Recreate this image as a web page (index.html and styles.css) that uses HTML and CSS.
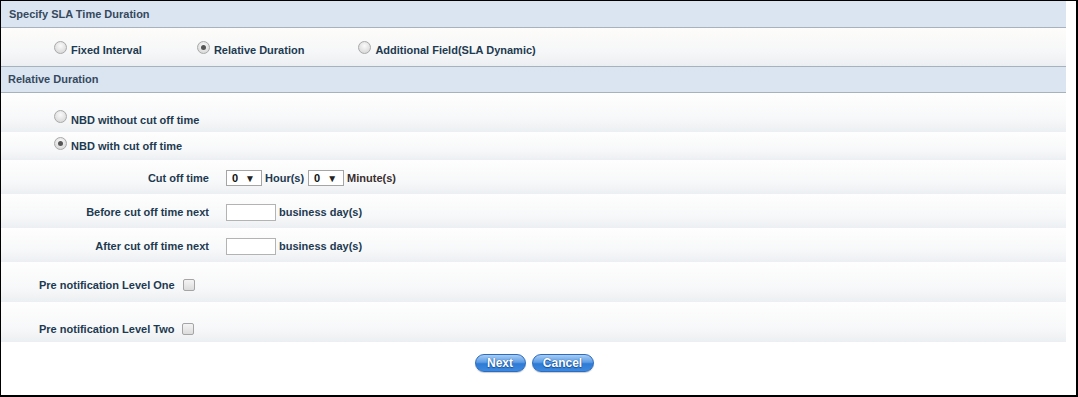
FILE: index.html
```html
<!DOCTYPE html>
<html>
<head>
<meta charset="utf-8">
<link rel="stylesheet" href="styles.css">
</head>
<body>
<div class="frame">
  <div class="panel">
    <div class="hdr first">Specify SLA Time Duration</div>
    <div class="radio-row">
      <label class="opt o1"><span class="radio"></span>Fixed Interval</label>
      <label class="opt o2"><span class="radio on"></span>Relative Duration</label>
      <label class="opt o3"><span class="radio"></span>Additional Field(SLA Dynamic)</label>
    </div>
    <div class="hdr">Relative Duration</div>
    <div class="row r-nbd1"><label class="opt"><span class="radio"></span>NBD without cut off time</label></div>
    <div class="row r-nbd2"><label class="opt"><span class="radio on"></span>NBD with cut off time</label></div>
    <div class="row r-field">
      <span class="lbl">Cut off time</span>
      <span class="sel">0<span class="arr">&#9660;</span></span>
      <span class="unit">Hour(s)</span>
      <span class="sel">0<span class="arr">&#9660;</span></span>
      <span class="unit min">Minute(s)</span>
    </div>
    <div class="row r-field">
      <span class="lbl">Before cut off time next</span>
      <span class="inp"></span>
      <span class="unit">business day(s)</span>
    </div>
    <div class="row r-field">
      <span class="lbl">After cut off time next</span>
      <span class="inp"></span>
      <span class="unit">business day(s)</span>
    </div>
    <div class="row r-pre1"><span class="plbl">Pre notification Level One</span><span class="chk"></span></div>
    <div class="row r-pre2"><span class="plbl">Pre notification Level Two</span><span class="chk"></span></div>
    <div class="btns">
      <button class="btn b-next">Next</button>
      <button class="btn b-cancel">Cancel</button>
    </div>
  </div>
</div>
</body>
</html>
```

FILE: styles.css
```css
* { box-sizing: border-box; }
html, body { margin: 0; padding: 0; background: #fff; }
body { font-family: "Liberation Sans", Arial, sans-serif; font-size: 11px; font-weight: bold; color: #1d3a50; }

.frame {
  width: 1078px;
  height: 397px;
  border: 1px solid #000;
  border-right-width: 2px;
  border-bottom-width: 2px;
  background: #fff;
  overflow: hidden;
}
.panel { width: 1065px; }

.hdr {
  height: 27px;
  background: #dbe5f1;
  border-top: 1px solid #a7b2bd;
  border-bottom: 1px solid #a7b2bd;
  color: #35495d;
  padding-left: 7px;
  display: flex;
  align-items: center;
  padding-bottom: 1px;
}
.hdr.first { border-top: 0; height: 27px; padding-left: 8px; padding-bottom: 0; }

.radio-row {
  height: 38px;
  background: linear-gradient(#fdfcfa, #f6f7f8 60%, #eceff2);
  display: flex;
  align-items: center;
  padding-top: 6px;
}
.opt { display: flex; align-items: center; white-space: nowrap; }
.o1 { margin-left: 53px; }
.o2 { margin-left: 55px; }
.o3 { margin-left: 54px; }

.radio {
  width: 13px;
  height: 13px;
  border-radius: 50%;
  border: 1px solid #a9a9a9;
  background: radial-gradient(circle at 50% 35%, #fafafa, #d9d9d9 80%);
  margin-right: 4px;
  position: relative;
  top: -3px;
  flex: none;
}
.radio.on::after {
  content: "";
  position: absolute;
  left: 3px; top: 3px;
  width: 5px; height: 5px;
  border-radius: 50%;
  background: #555;
}

.row {
  background: linear-gradient(#fefefe, #f7f8f9 65%, #eceff2);
  display: flex;
  align-items: center;
}
.r-nbd1 { height: 39px; padding-left: 53px; padding-top: 14px; }
.r-nbd2 { height: 28px; padding-left: 53px; padding-top: 0; }
.r-field { height: 34px; padding-top: 2px; }
.r-field:nth-of-type(5) { height: 35px; }
.lbl { width: 208px; text-align: right; margin-right: 17px; }
.sel {
  width: 36px; height: 16px;
  border: 1px solid #a5a5a5;
  background: #fff;
  display: flex; align-items: center;
  padding-left: 5px;
  position: relative;
  color: #111;
  font-size: 11px;
}
.arr { position: absolute; right: 6px; top: 2px; font-size: 10px; color: #222; }
.unit { margin-left: 3px; margin-right: 4px; color: #1d3a50; }
.unit.min { color: #3a2e2e; }
.inp {
  width: 50px; height: 17px;
  border: 1px solid #b3b3b3;
  background: #fff;
}
.r-pre1 { height: 40px; padding-left: 38px; padding-top: 6px; }
.r-pre2 { height: 40px; padding-left: 38px; padding-top: 13px; }
.plbl { margin-right: 8px; }
.chk {
  width: 12px; height: 12px;
  border: 1px solid #a5a5a5;
  border-radius: 2px;
  background: linear-gradient(#f4f4f4, #dcdcdc);
}

.btns {
  display: flex;
  justify-content: center;
  gap: 6px;
  padding-top: 12px;
  padding-left: 1px;
}
.btn {
  height: 18px;
  border-radius: 9px;
  border: 1px solid #2d6cbf;
  background: linear-gradient(#a8cdf3, #5d9de6 45%, #2f7ad4 55%, #3d8ae0);
  color: #fff;
  font-family: "Liberation Sans", Arial, sans-serif;
  font-weight: bold;
  font-size: 12px;
  text-shadow: 0 0 1px #1a4f96, 0 1px 1px #1a4f96;
  padding: 0;
  line-height: 15px;
  box-shadow: 0 1px 1px rgba(0,0,0,0.2);
}
.b-next { width: 51px; }
.b-cancel { width: 62px; }
```
